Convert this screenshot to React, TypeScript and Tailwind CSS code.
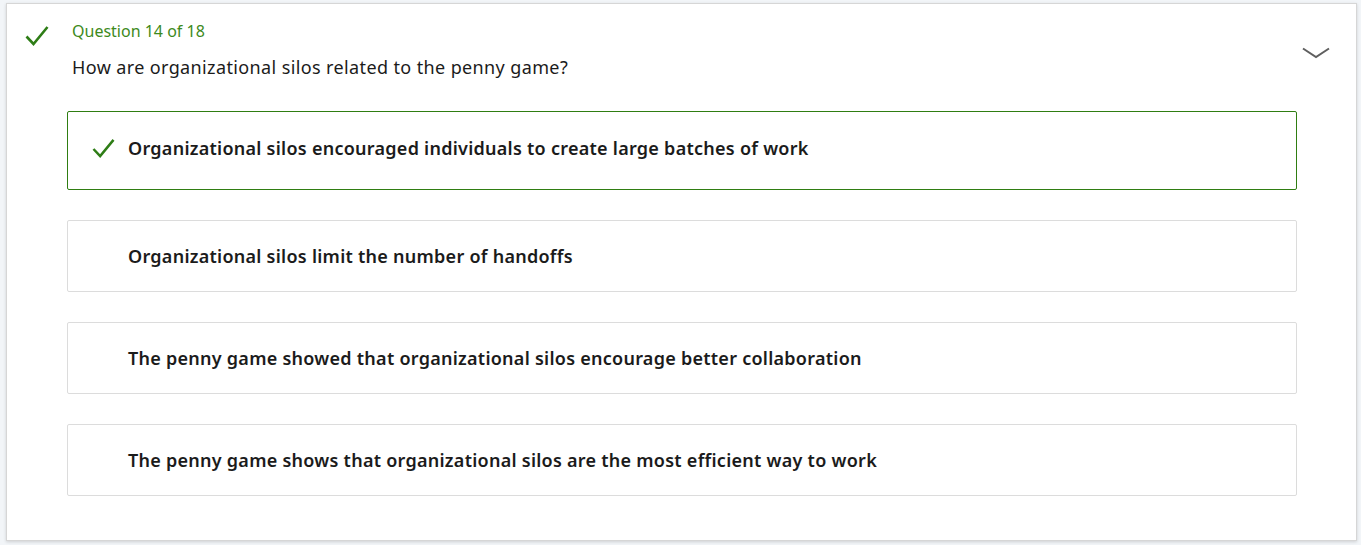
import React from "react";

const Check = ({ className }: { className?: string }) => (
  <svg viewBox="0 0 24 22" className={className} fill="none" stroke="currentColor" strokeWidth="2.6" strokeLinecap="butt" strokeLinejoin="miter">
    <path d="M1.5 11.5 L8.5 19 L22.5 2" />
  </svg>
);

const options = [
  { text: "Organizational silos encouraged individuals to create large batches of work", correct: true },
  { text: "Organizational silos limit the number of handoffs", correct: false },
  { text: "The penny game showed that organizational silos encourage better collaboration", correct: false },
  { text: "The penny game shows that organizational silos are the most efficient way to work", correct: false },
];

export default function App() {
  return (
    <div
      className="h-[545px] w-[1361px] bg-[#f2f5f8] pt-[3px] pl-[6px] pr-[4px]"
      style={{ fontFamily: '"Noto Sans", "Open Sans", sans-serif' }}
    >
      <div className="h-[538px] bg-white border border-[#d6d6d6] shadow-[0_1px_3px_rgba(0,0,0,0.15)] flex flex-col">
        <div className="flex items-start pt-[15px]">
          <div className="w-[65px] flex pl-[18px] pt-[6px]">
            <Check className="w-[24px] h-[22px] text-[#2e7d16]" />
          </div>
          <div className="flex-1 flex flex-col">
            <div className="text-[16px] leading-[24px] text-[#3d8a1c]">Question 14 of 18</div>
            <div className="text-[18px] leading-[26px] mt-[11px] text-[#1b1b1b] tracking-[0.38px]">
              How are organizational silos related to the penny game?
            </div>
          </div>
          <div className="pt-[28px] pr-[26px]">
            <svg viewBox="0 0 28 12" className="w-[28px] h-[12px] text-[#5f5f5f]" fill="none" stroke="currentColor" strokeWidth="2">
              <path d="M1 1.5 L14 10 L27 1.5" />
            </svg>
          </div>
        </div>
        <div className="flex flex-col gap-[30px] ml-[60px] mr-[59px] mt-[31px]">
          {options.map((o, i) => (
            <div
              key={i}
              className={
                o.correct
                  ? "h-[79px] flex items-center pb-[4px] rounded-[2px] border border-[#2f7d12] bg-white"
                  : "h-[72px] flex items-center rounded-[2px] border border-[#dcdcdc] bg-white"
              }
            >
              <div className="w-[60px] flex justify-end pr-[13px]">
                {o.correct && <Check className="w-[23px] h-[21px] text-[#2e7d16]" />}
              </div>
              <div className="text-[18px] font-semibold text-[#1b1b1b] tracking-[0.26px]">{o.text}</div>
            </div>
          ))}
        </div>
      </div>
    </div>
  );
}
